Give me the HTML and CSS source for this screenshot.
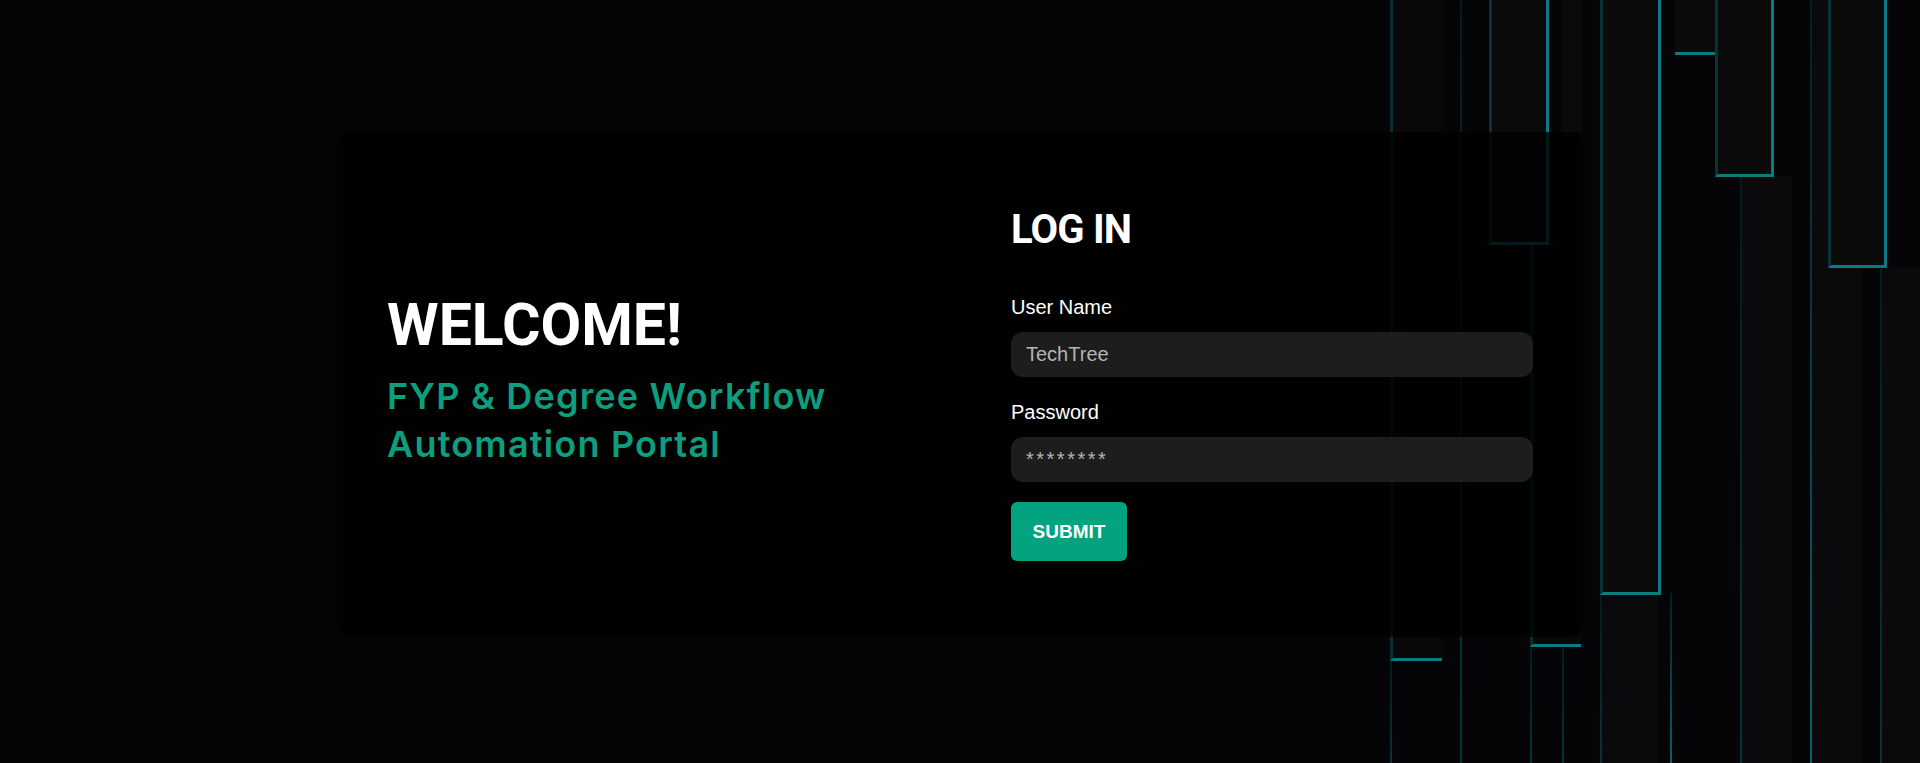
FILE: index.html
```html
<!DOCTYPE html>
<html>
<head>
  <title>Log In</title>
  <link rel="stylesheet" href="styles.css">
</head>
<body>

  <div class="rain">
    <div class="trail" style="left:212px;top:595px;width:56px;bottom:0"></div>
    <div class="trail" style="left:352px;top:177px;width:50px;bottom:0"></div>
    <div class="trail" style="left:422px;top:0;width:50px;bottom:0"></div>
    <div class="trail" style="left:492px;top:268px;width:38px;bottom:0"></div>
    <div class="trail" style="left:172px;top:0;width:20px;height:132px"></div>

    <div class="line" style="left:70px;top:0;bottom:0"></div>
    <div class="line" style="left:0;top:661px;bottom:0"></div>
    <div class="line" style="left:140px;top:647px;bottom:0"></div>
    <div class="line" style="left:172px;top:647px;bottom:0"></div>
    <div class="line" style="left:210px;top:595px;bottom:0"></div>
    <div class="line bright" style="left:280px;top:593px;bottom:0"></div>
    <div class="line" style="left:350px;top:177px;bottom:0"></div>
    <div class="line bright" style="left:420px;top:0;bottom:0"></div>
    <div class="line" style="left:490px;top:268px;bottom:0"></div>

    <div class="drop no-right" style="left:0;top:0;width:52px;height:661px"></div>
    <div class="drop" style="left:99px;top:0;width:60px;height:245px"></div>
    <div class="drop no-right" style="left:140px;top:245px;width:51px;height:402px"></div>
    <div class="drop" style="left:210px;top:0;width:61px;height:595px"></div>
    <div class="drop no-left" style="left:285px;top:0;width:43px;height:55px"></div>
    <div class="drop" style="left:325px;top:0;width:59px;height:177px"></div>
    <div class="drop" style="left:438px;top:0;width:59px;height:268px"></div>
  </div>

  <div class="card">
    <div class="intro">
      <h1>WELCOME!</h1>
      <p>FYP &amp; Degree Workflow<br>Automation Portal</p>
    </div>

    <form class="login">
      <h2>LOG IN</h2>

      <label for="user">User Name</label>
      <input type="text" id="user" value="TechTree">

      <label for="pass">Password</label>
      <input type="text" id="pass" value="********">

      <button type="submit">SUBMIT</button>
    </form>
  </div>

</body>
</html>
```

FILE: styles.css
```css
html, body {
  height: 100%;
}

body {
  margin: 0;
  padding-top: 6px;
  box-sizing: border-box;
  position: relative;
  overflow: hidden;
  background-color: #050507;
  font-family: "Liberation Sans", Arial, sans-serif;
  display: flex;
  justify-content: center;
  align-items: center;
}

/* decorative columns on the right */
.rain {
  position: absolute;
  top: 0;
  right: 0;
  bottom: 0;
  width: 530px;
}

.rain div {
  position: absolute;
}

.trail {
  background-color: rgba(255, 255, 255, 0.022);
}

.line {
  width: 2px;
  background: linear-gradient(to bottom, rgba(10, 100, 110, 0.22), rgba(10, 120, 130, 0.4));
}

.line.bright {
  background: linear-gradient(to bottom, rgba(10, 100, 110, 0.25), rgba(11, 127, 136, 0.75));
}

.drop {
  box-sizing: border-box;
  background-color: #0a0a0a;
  border: 3px solid #0a7a83;
  border-top: 0;
  border-left-color: rgba(10, 110, 120, 0.4);
}

.drop.no-right {
  border-right: 0;
  background-color: #080808;
}

.drop.no-left {
  border-left: 0;
}

.card {
  position: relative;
  z-index: 1;
  width: 1246px;
  height: 505px;
  box-sizing: border-box;
  padding: 0 50px;
  border-radius: 12px;
  background-color: rgba(0, 0, 0, 0.78);
  display: grid;
  grid-template-columns: 1fr 1fr;
  column-gap: 102px;
  align-items: center;
}

.intro {
  padding-bottom: 9px;
}

.intro h1 {
  margin: 0 0 15px;
  font-family: Roboto, sans-serif;
  font-weight: 700;
  font-size: 59px;
  line-height: 65px;
  color: #fff;
}

.intro p {
  margin: 0;
  font-family: Inter, sans-serif;
  font-weight: 600;
  font-size: 36px;
  line-height: 48px;
  letter-spacing: 1.2px;
  color: #0c9e7e;
}

.login {
  display: flex;
  flex-direction: column;
  align-items: flex-start;
  padding-bottom: 2px;
}

.login h2 {
  margin: 0 0 42px;
  font-family: Roboto, sans-serif;
  font-weight: 700;
  font-size: 40px;
  line-height: 48px;
  letter-spacing: -0.8px;
  color: #fff;
}

label {
  display: block;
  font-size: 20px;
  line-height: 22px;
  color: #fff;
  margin-bottom: 14px;
}

input {
  width: 100%;
  height: 45px;
  box-sizing: border-box;
  padding: 0 15px;
  border: 0;
  border-radius: 12px;
  background-color: rgba(34, 34, 34, 0.85);
  font-family: "Liberation Sans", Arial, sans-serif;
  font-size: 20px;
  color: #b4b4b4;
  margin-bottom: 24px;
}

#pass {
  margin-bottom: 20px;
  letter-spacing: 2.5px;
}

button {
  width: 116px;
  height: 59px;
  border: 0;
  border-radius: 6px;
  background-color: #02a37e;
  font-family: "Liberation Sans", Arial, sans-serif;
  font-weight: 700;
  font-size: 19px;
  color: #fff;
  cursor: pointer;
}
```
